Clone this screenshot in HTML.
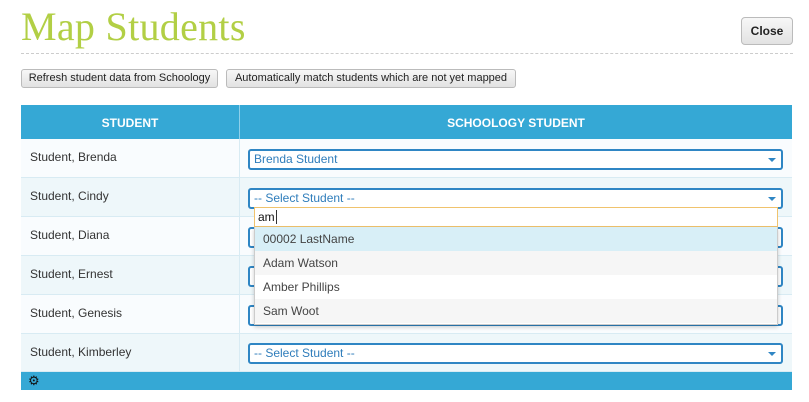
<!DOCTYPE html>
<html><head><style>
*{box-sizing:border-box;margin:0;padding:0}
body{width:809px;height:402px;background:#fff;font-family:"Liberation Sans",sans-serif;position:relative;overflow:hidden;color:#333}
.a{position:absolute}
h1{position:absolute;left:21px;top:3px;font-family:"Liberation Serif",serif;font-weight:normal;font-size:40px;color:#b2cf45;letter-spacing:0.3px}
.dash{left:21px;top:53px;width:772px;border-top:1px dashed #ccc}
.btn{border:1px solid #bbb;border-radius:3px;background:linear-gradient(#f7f7f7,#e2e2e2);font-size:11px;color:#222;text-align:center;line-height:16px}
.row{left:21px;width:771px;height:39px;border-bottom:1px solid #d8ebf3}
.name{position:absolute;left:9px;top:11px;font-size:12px;color:#333}
.sel{position:absolute;height:21px;border:2px solid #2f86c4;border-radius:3px;background:#fff;font-size:12px;color:#2f7dbb;line-height:17px;padding-left:4px}
.sel:after{content:"";position:absolute;right:5px;top:7px;border:4px solid transparent;border-top:4px solid #2f86c4;border-bottom:0}
.item{height:24px;font-size:12px;padding-left:8px;line-height:25px;color:#444}
</style></head><body>
<h1>Map Students</h1>
<div class="a btn" style="left:741px;top:17px;width:52px;height:28px;line-height:26px;font-size:12px;font-weight:bold;border-radius:4px">Close</div>
<div class="a dash"></div>
<div class="a btn" style="left:21px;top:69px;width:197px;height:19px">Refresh student data from Schoology</div>
<div class="a btn" style="left:226px;top:69px;width:290px;height:19px">Automatically match students which are not yet mapped</div>
<div class="a" style="left:21px;top:105px;width:771px;height:34px;background:#35a8d5;color:#fff;font-weight:bold;font-size:12px">
<div class="a" style="left:0;width:218px;text-align:center;top:11px">STUDENT</div>
<div class="a" style="left:218px;top:0;width:1px;height:34px;background:#8fd0ea"></div>
<div class="a" style="left:219px;width:552px;text-align:center;top:11px">SCHOOLOGY STUDENT</div>
</div>
<div class="a row" style="top:139px;background:#f9fcfe"><div class="name">Student, Brenda</div></div>
<div class="a row" style="top:178px;background:#eef7fa"><div class="name">Student, Cindy</div></div>
<div class="a row" style="top:217px;background:#f9fcfe"><div class="name">Student, Diana</div></div>
<div class="a row" style="top:256px;background:#eef7fa"><div class="name">Student, Ernest</div></div>
<div class="a row" style="top:295px;background:#f9fcfe"><div class="name">Student, Genesis</div></div>
<div class="a row" style="top:334px;background:#eef7fa;height:38px"><div class="name">Student, Kimberley</div></div>
<div class="a" style="left:239px;top:139px;width:1px;height:233px;background:#d8ebf3"></div>
<div class="a" style="left:21px;top:372px;width:771px;height:18px;background:#35a8d5"><span style="position:absolute;left:7px;top:1px;font-size:13px;color:#111">⚙</span></div>
<div class="sel" style="left:248px;top:149px;width:535px">Brenda Student</div>
<div class="sel" style="left:248px;top:188px;width:535px">-- Select Student --</div>
<div class="sel" style="left:248px;top:227px;width:535px"></div>
<div class="sel" style="left:248px;top:266px;width:535px"></div>
<div class="sel" style="left:248px;top:305px;width:535px"></div>
<div class="sel" style="left:248px;top:343px;width:535px">-- Select Student --</div>
<div class="a" style="left:254px;top:207px;width:524px;height:20px;border:1px solid #f0c36d;background:#fff;font-size:12px;line-height:18px;padding-left:3px;color:#111">am<span style="border-left:1px solid #333;margin-left:1px"></span></div>
<div class="a" style="left:254px;top:227px;width:524px;height:98px;border:1px solid #ccc;border-top:0;background:#fff;box-shadow:0 2px 4px rgba(0,0,0,.2)">
<div class="item" style="background:#d8eff7">00002 LastName</div>
<div class="item" style="background:#f6f6f6">Adam Watson</div>
<div class="item">Amber Phillips</div>
<div class="item" style="background:#f6f6f6">Sam Woot</div>
</div>
</body></html>
